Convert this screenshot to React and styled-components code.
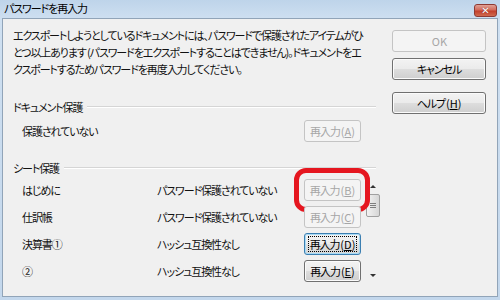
import React from 'react';
import styled, { createGlobalStyle, css } from 'styled-components';

const Global = createGlobalStyle`
  html, body { margin: 0; padding: 0; background: #f0f0f0; }
  body {
    width: 500px; height: 300px; overflow: hidden;
    font-family: "Noto Sans CJK JP", "Noto Sans", sans-serif;
    font-feature-settings: "palt";
    color: #111;
  }
`;

const TEXT = css`
  font-size: 11px; letter-spacing: -1.1px;
`;

const Window = styled.div`
  width: 500px; height: 300px; box-sizing: border-box;
  display: flex; flex-direction: column;
  background: linear-gradient(#bed4ea, #cfe0f1 20px, #c3d7ec);
  padding: 0 2px 3px 2px;
`;

const TitleBar = styled.div`
  height: 17px; flex: none;
  display: flex; align-items: flex-start; justify-content: space-between;
  padding-left: 2px;
`;

const TitleText = styled.span`
  ${TEXT}
  line-height: 17px; color: #000;
`;

const CloseButton = styled.div`
  width: 23px; height: 13px; margin-top: 4px; margin-right: 1px; box-sizing: border-box;
  border: 1px solid #8e3a33; border-radius: 3px;
  background: linear-gradient(#e0a196, #d36b5b 45%, #c3402c 55%, #cf6a4f);
  display: flex; align-items: center; justify-content: center;
  color: #fff; font-family: "DejaVu Sans", sans-serif; font-weight: bold; font-size: 10px; line-height: 1;
  text-shadow: 0 0 1px #6b1e14;
`;

const Client = styled.div`
  flex: 1; display: flex; box-sizing: border-box;
  margin-top: 1px;
  background: #f0f0f0;
  border: 1px solid #91a4b8;
  padding: 8px 11px 0 10px;
`;

const Main = styled.div`
  width: 367px; flex: none; display: flex; flex-direction: column;
`;

const Side = styled.div`
  width: 94px; margin-left: 12px; margin-top: 3px;
  display: flex; flex-direction: column;
`;

const Desc = styled.div`
  ${TEXT}
  line-height: 17px; white-space: nowrap;
`;

const SectionHeader = styled.div`
  ${TEXT}
  display: flex; align-items: center; gap: 5px;
  height: 17px; margin-top: ${p => p.$mt}px; margin-right: 4px;
`;

const Rule = styled.div`
  flex: 1; border-top: 1px solid #d5d5d5; border-bottom: 1px solid #fff;
`;

const Row = styled.div`
  ${TEXT}
  display: grid; grid-template-columns: 135px 147px 57px;
  align-items: center; height: 22px;
`;

const SingleRow = styled(Row)`
  margin-top: 5px; padding-left: 9px;
`;

const Label = styled.span`
  grid-column: ${p => p.$span ? 'span 2' : 'auto'};
  white-space: nowrap;
`;

const SheetList = styled.div`
  display: flex; margin-top: 3px;
`;

const Rows = styled.div`
  display: flex; flex-direction: column; gap: 5px; padding-left: 9px;
`;

const Cell = styled.div`
  position: relative; display: flex;
`;

const Highlight = styled.div`
  position: absolute; left: -10px; top: -11px; right: -9px; bottom: -11px;
  border: 5px solid #e5161f; border-radius: 12px; pointer-events: none;
`;

const Btn = styled.button`
  width: ${p => p.$w}px; height: 22px; box-sizing: border-box; padding: 0;
  font-family: "Noto Sans CJK JP", "Noto Sans", sans-serif;
  font-feature-settings: "palt";
  ${TEXT}
  line-height: 20px;
  border-radius: 3px; margin-top: ${p => p.$mt || 0}px;
  display: flex; align-items: center; justify-content: center;
  ${p => p.$kind === 'disabled' && css`
    border: 1px solid #c4c4c4; background: #f4f4f4; color: #a6a6a6;
  `}
  ${p => p.$kind === 'normal' && css`
    border: 1px solid #707070; color: #000;
    background: linear-gradient(#f3f3f3, #ebebeb 48%, #dddddd 52%, #cfcfcf);
    box-shadow: inset 0 0 0 1px #fbfbfb;
  `}
  ${p => p.$kind === 'focused' && css`
    border: 1px solid #3c7fb1; color: #000;
    background: linear-gradient(#f3f3f3, #ececec 48%, #e0e0e0 52%, #d6d6d6);
    box-shadow: inset 0 0 0 1px #a9dbf6;
  `}
`;

const Latin = styled.span`
  letter-spacing: 0;
  margin-left: 1px;
`;

const Focus = styled.span`
  border: 1px dotted #000; padding: 0 1px; line-height: 14px;
`;

const Scrollbar = styled.div`
  width: 15px; margin-left: 4px; height: 103px;
  display: flex; flex-direction: column; align-items: center;
`;

const ArrowBox = styled.div`
  height: 14px; width: 15px; flex: none;
  display: flex; align-items: center; justify-content: center;
`;

const Arrow = styled.div`
  width: 0; height: 0;
  border-left: 3px solid transparent; border-right: 3px solid transparent;
  ${p => p.$up ? css`border-bottom: 3px solid #333;` : css`border-top: 3px solid #333;`}
`;

const Thumb = styled.div`
  width: 14px; height: 23px; margin-top: 1px; box-sizing: border-box;
  border: 1px solid #a0a0a0; border-radius: 2px;
  background: linear-gradient(to right, #f3f3f3, #e4e4e4 50%, #d6d6d6);
  display: flex; align-items: center; justify-content: center;
`;

const Grip = styled.div`
  width: 6px; height: 5px;
  background: repeating-linear-gradient(#7d7d7d 0 1px, transparent 1px 2px);
`;

const Spacer = styled.div`flex: 1;`;

const Mn = ({ children }) => <Latin>(<u>{children}</u>)</Latin>;

const sheets = [
  { name: 'はじめに', status: 'パスワード保護されていない', key: 'B', kind: 'disabled', hl: true },
  { name: '仕訳帳', status: 'パスワード保護されていない', key: 'C', kind: 'disabled' },
  { name: '決算書①', status: 'ハッシュ互換性なし', key: 'D', kind: 'focused' },
  { name: '②', status: 'ハッシュ互換性なし', key: 'E', kind: 'normal' },
];

export default function App() {
  return (
    <>
      <Global />
      <Window>
        <TitleBar>
          <TitleText>パスワードを再入力</TitleText>
          <CloseButton>✕</CloseButton>
        </TitleBar>
        <Client>
          <Main>
            <Desc>
              エクスポートしようとしているドキュメントには、パスワードで保護されたアイテムがひ<br />
              とつ以上あります (パスワードをエクスポートすることはできません)。ドキュメントをエ<br />
              クスポートするためパスワードを再度入力してください。
            </Desc>
            <SectionHeader $mt={20}>ドキュメント保護<Rule /></SectionHeader>
            <SingleRow>
              <Label $span>保護されていない</Label>
              <Btn $w={57} $kind="disabled">再入力<Mn>A</Mn></Btn>
            </SingleRow>
            <SectionHeader $mt={17}>シート保護<Rule /></SectionHeader>
            <SheetList>
              <Rows>
                {sheets.map(s => (
                  <Row key={s.key}>
                    <Label>{s.name}</Label>
                    <Label>{s.status}</Label>
                    <Cell>
                      <Btn $w={57} $kind={s.kind}>
                        {s.kind === 'focused'
                          ? <Focus>再入力<Mn>{s.key}</Mn></Focus>
                          : <>再入力<Mn>{s.key}</Mn></>}
                      </Btn>
                      {s.hl && <Highlight />}
                    </Cell>
                  </Row>
                ))}
              </Rows>
              <Scrollbar>
                <ArrowBox><Arrow $up /></ArrowBox>
                <Thumb><Grip /></Thumb>
                <Spacer />
                <ArrowBox><Arrow /></ArrowBox>
              </Scrollbar>
            </SheetList>
          </Main>
          <Side>
            <Btn $w={94} $kind="disabled"><Latin>OK</Latin></Btn>
            <Btn $w={94} $kind="normal" $mt={6}>キャンセル</Btn>
            <Btn $w={94} $kind="normal" $mt={12}>ヘルプ<Mn>H</Mn></Btn>
          </Side>
        </Client>
      </Window>
    </>
  );
}
